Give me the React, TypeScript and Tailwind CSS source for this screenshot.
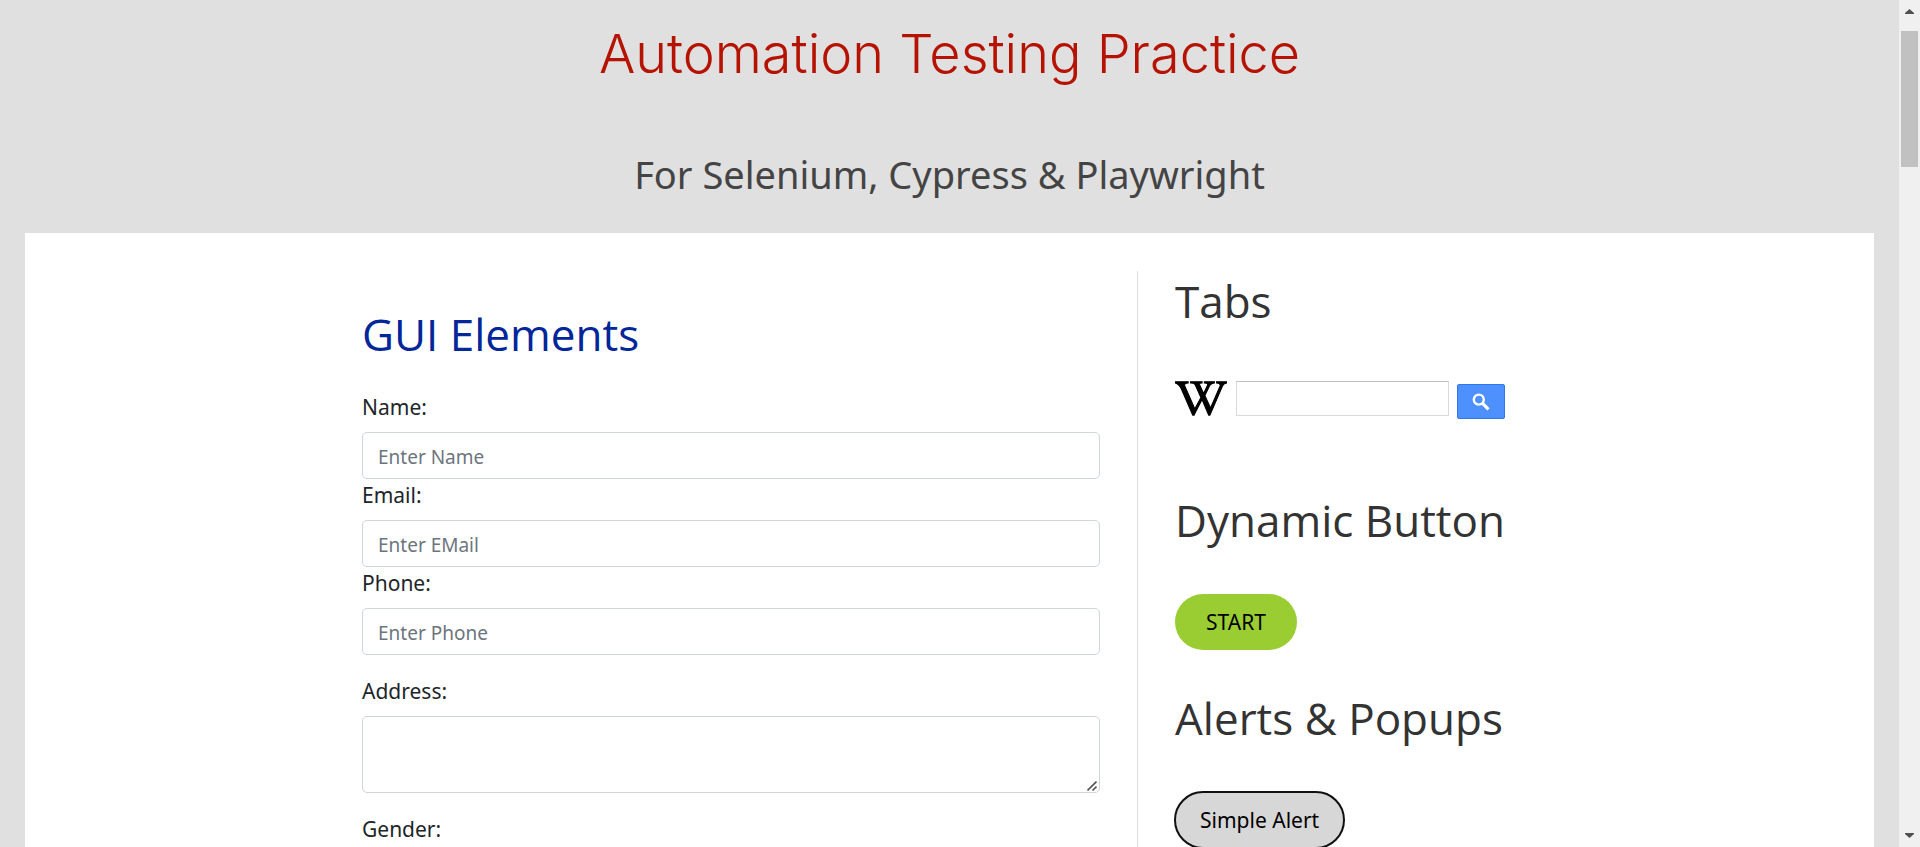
import type { InputHTMLAttributes, ReactNode } from "react";
import { FaWikipediaW } from "react-icons/fa";

const bodyFont = "font-['Noto_Sans','Open_Sans',sans-serif]";
const headingFont = "font-['Open_Sans',sans-serif]";

type FieldProps = InputHTMLAttributes<HTMLInputElement> & { id: string; label: string };

function Field({ id, label, ...rest }: FieldProps) {
  return (
    <div>
      <label htmlFor={id} className="mb-2 block text-[21px] leading-[33px]">
        {label}
      </label>
      <input
        id={id}
        className="block h-[47px] w-full rounded-[5px] border border-[#ced4da] bg-white px-[15px] pt-[2px] text-[19px] outline-none placeholder:text-[#6c757d]"
        {...rest}
      />
    </div>
  );
}

function SideTitle({ children }: { children: ReactNode }) {
  return (
    <h2 className={`${headingFont} text-[44px] leading-[60px] whitespace-nowrap text-[#333333]`}>
      {children}
    </h2>
  );
}

function SearchIcon() {
  return (
    <svg viewBox="0 0 18 18" className="size-[18px]" fill="none" stroke="white" aria-hidden="true">
      <circle cx="6.8" cy="6.6" r="5" strokeWidth="2.4" />
      <path d="M10.6 10.4 L16.5 16.3" strokeWidth="3.2" />
    </svg>
  );
}

function ResizeGrip() {
  return (
    <svg
      viewBox="0 0 10 10"
      className="pointer-events-none absolute right-[3px] bottom-[2px] size-[10px]"
      fill="none"
      stroke="#555555"
      strokeWidth="1.6"
      aria-hidden="true"
    >
      <path d="M0.5 9.5 L9.5 0.5 M5.5 9.5 L9.5 5.5" />
    </svg>
  );
}

function ScrollBar() {
  return (
    <div className="flex w-[21px] shrink-0 flex-col items-center bg-[#f0f0f0]" aria-hidden="true">
      <svg viewBox="0 0 21 31" className="h-[31px] w-[21px]" fill="#505050">
        <path d="M6 14V13L10.5 9L15 13V14Z" />
      </svg>
      <div className="h-[136px] w-[17px] bg-[#c1c1c1]" />
      <svg viewBox="0 0 21 21" className="mt-auto h-[21px] w-[21px]" fill="#505050">
        <path d="M6 7V8L10.5 12L15 8V7Z" />
      </svg>
    </div>
  );
}

export default function App() {
  return (
    <div className={`${bodyFont} flex h-screen overflow-hidden bg-[#e0e0e0] text-[#212529]`}>
      <div className="flex min-w-0 flex-1 flex-col px-[25px]">
        <header className="flex shrink-0 flex-col items-center pt-6 text-center">
          <h1 className="font-[Inter,sans-serif] text-[54px] leading-[60px] font-light text-[#b51200]">
            Automation Testing Practice
          </h1>
          <p className="mt-[60px] pb-[29px] text-[38px] leading-[60px] text-[#444444]">
            For Selenium, Cypress &amp; Playwright
          </p>
        </header>

        <div className="flex flex-1 justify-center bg-white pt-[38px]">
          <div className="flex w-full max-w-[1175px]">
            <main className="min-w-0 flex-1 pt-[33px] pr-[37px]">
              <h2 className={`${headingFont} mb-[27px] text-[44px] leading-[60px] text-[#002699]`}>
                GUI Elements
              </h2>
              <form>
                <Field id="name" label="Name:" placeholder="Enter Name" />
                <Field id="email" label="Email:" placeholder="Enter EMail" />
                <Field id="phone" label="Phone:" placeholder="Enter Phone" />
                <div className="mt-5">
                  <label htmlFor="address" className="mb-2 block text-[21px] leading-[33px]">
                    Address:
                  </label>
                  <div className="relative">
                    <textarea
                      id="address"
                      className="block h-[77px] w-full resize-none rounded-[5px] border border-[#ced4da] bg-white px-[15px] py-2 text-[19px] outline-none"
                    />
                    <ResizeGrip />
                  </div>
                </div>
                <fieldset className="mt-5">
                  <legend className="text-[21px] leading-[33px]">Gender:</legend>
                </fieldset>
              </form>
            </main>

            <aside className="w-[400px] shrink-0 border-l border-[#dddddd] pl-[37px]">
              <SideTitle>Tabs</SideTitle>
              <form className="mt-[50px] flex items-start">
                <FaWikipediaW
                  className="-my-1 h-[43px] w-[52px] stroke-black text-black"
                  strokeWidth={14}
                  aria-label="Wikipedia"
                />
                <input
                  type="text"
                  aria-label="Search Wikipedia"
                  className="ml-[9px] h-[35px] w-[213px] border border-[#d9d9d9] border-t-[#c0c0c0] bg-white px-2 text-[19px] outline-none"
                />
                <button
                  type="button"
                  aria-label="Search"
                  className="mt-[3px] ml-2 flex h-[35px] w-12 items-center justify-center rounded-[2px] border border-[#3079ed] bg-[#4d90fe]"
                >
                  <SearchIcon />
                </button>
              </form>

              <div className="mt-[71px]">
                <SideTitle>Dynamic Button</SideTitle>
                <button
                  type="button"
                  className="mt-11 block h-14 rounded-full bg-[#9acd32] px-[31px] pt-[2px] text-[21px] text-black"
                >
                  START
                </button>
              </div>

              <div className="mt-[38px]">
                <SideTitle>Alerts &amp; Popups</SideTitle>
                <button
                  type="button"
                  className="mt-11 block h-14 rounded-full bg-[#d7d7d7] px-[25px] pt-[2px] text-[21px] text-black outline-2 -outline-offset-1 outline-[#101010]"
                >
                  Simple Alert
                </button>
              </div>
            </aside>
          </div>
        </div>
      </div>
      <ScrollBar />
    </div>
  );
}
